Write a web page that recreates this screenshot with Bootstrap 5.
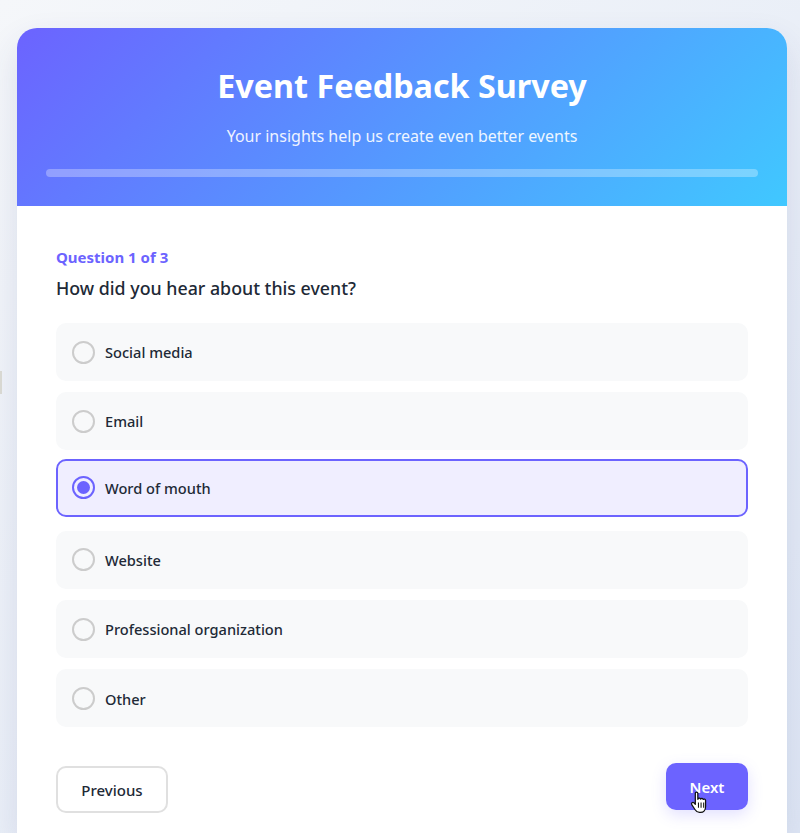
<!DOCTYPE html>
<html lang="en">
<head>
<meta charset="utf-8">
<title>Event Feedback Survey</title>
<link href="https://cdn.jsdelivr.net/npm/bootstrap@5.3.0/dist/css/bootstrap.min.css" rel="stylesheet">
<style>
html,body{height:833px;overflow:hidden}
body{background:linear-gradient(135deg,#f5f7fa 0%,#dfe7f5 100%);font-family:"Noto Sans","Open Sans",sans-serif;color:#212936;padding:28px 13px 0 17px}
.survey-shell{background:#fff;border-radius:20px 20px 0 0;box-shadow:0 15px 35px rgba(50,60,120,.12);height:805px;overflow:hidden}
.survey-head{background:linear-gradient(135deg,#6c63ff 0%,#40c8ff 100%);height:178px;padding:37px 29px 0;color:#fff;text-align:center}
.survey-title{font-size:32.3px;font-weight:700;line-height:40px;margin:0}
.survey-sub{font-size:16px;line-height:24px;margin:19px 0 0;opacity:.9}
.survey-track{height:8px;border-radius:4px;background:rgba(255,255,255,.3);margin-top:21px}
.survey-body{padding:41px 39px 0}
.q-count{color:#6c63ff;font-size:15px;font-weight:700;line-height:21px}
.q-text{font-size:17.8px;font-weight:500;line-height:27px;margin:7px 0 21px}
.opt-row{height:58px;background:#f8f9fa;border-radius:10px;margin-bottom:11.3px;padding:0 16px;font-size:14.6px;font-weight:500}
.opt-row.picked{background:#f0eeff;border:2px solid #6c63ff;transform:translateY(-3px);padding:0 14px}
.opt-dot{width:23px;height:23px;border:2px solid #ccc;border-radius:50%;margin-right:10px;flex:none}
.opt-label{margin-top:2px}
.picked .opt-dot{border-color:#6c63ff}
.picked .opt-dot::after{content:"";width:13px;height:13px;border-radius:50%;background:#6c63ff}
.q-nav{margin-top:39px}
.nav-prev,.nav-next{font-size:15px;font-weight:500;border-radius:10px;height:47px;padding:0}
.nav-prev{width:112px;background:#fff;border:2px solid #e0e0e0;color:#212936}
.nav-next{width:82px;background:#6c63ff;border:0;color:#fff;font-weight:600;transform:translateY(-3px);box-shadow:0 5px 15px rgba(108,99,255,.2);position:relative}
.hand-cursor{position:absolute;left:24px;top:28px;width:19px;height:23px}
.side-tick{position:absolute;left:0;top:371px;width:2px;height:23px;background:#d8d8d2}
</style>
</head>
<body>
<div class="side-tick"></div>
<main class="survey-shell">
  <header class="survey-head">
    <h1 class="survey-title">Event Feedback Survey</h1>
    <p class="survey-sub">Your insights help us create even better events</p>
    <div class="survey-track"></div>
  </header>
  <section class="survey-body">
    <div class="q-count">Question 1 of 3</div>
    <h2 class="q-text">How did you hear about this event?</h2>
    <div class="opt-row d-flex align-items-center"><span class="opt-dot"></span><span class="opt-label">Social media</span></div>
    <div class="opt-row d-flex align-items-center"><span class="opt-dot"></span><span class="opt-label">Email</span></div>
    <div class="opt-row picked d-flex align-items-center"><span class="opt-dot d-flex align-items-center justify-content-center"></span><span class="opt-label">Word of mouth</span></div>
    <div class="opt-row d-flex align-items-center"><span class="opt-dot"></span><span class="opt-label">Website</span></div>
    <div class="opt-row d-flex align-items-center"><span class="opt-dot"></span><span class="opt-label">Professional organization</span></div>
    <div class="opt-row d-flex align-items-center"><span class="opt-dot"></span><span class="opt-label">Other</span></div>
    <div class="q-nav d-flex justify-content-between">
      <button class="btn nav-prev" type="button">Previous</button>
      <button class="btn nav-next" type="button">Next
        <svg class="hand-cursor" viewBox="0 0 18 22" aria-hidden="true"><path d="M5 2.200c0-1.500 2.400-1.500 2.400 0V8l.3-.6c.5-1 2.200-.8 2.400.3.600-.9 2.200-.7 2.400.4.700-.7 2.300-.3 2.300 1V15c0 3-1.800 5.500-4.800 5.500H9c-2 0-3.200-1-4.200-2.600L1.600 13c-.9-1.400.9-2.800 2.100-1.600L5 12.700V2.200z" fill="#fff" stroke="#111" stroke-width="1.200" stroke-linejoin="round"/><path d="M8 11v5M10.500 11v5M13 11v5" stroke="#111" stroke-width="1" fill="none"/></svg>
      </button>
    </div>
  </section>
</main>
</body>
</html>
